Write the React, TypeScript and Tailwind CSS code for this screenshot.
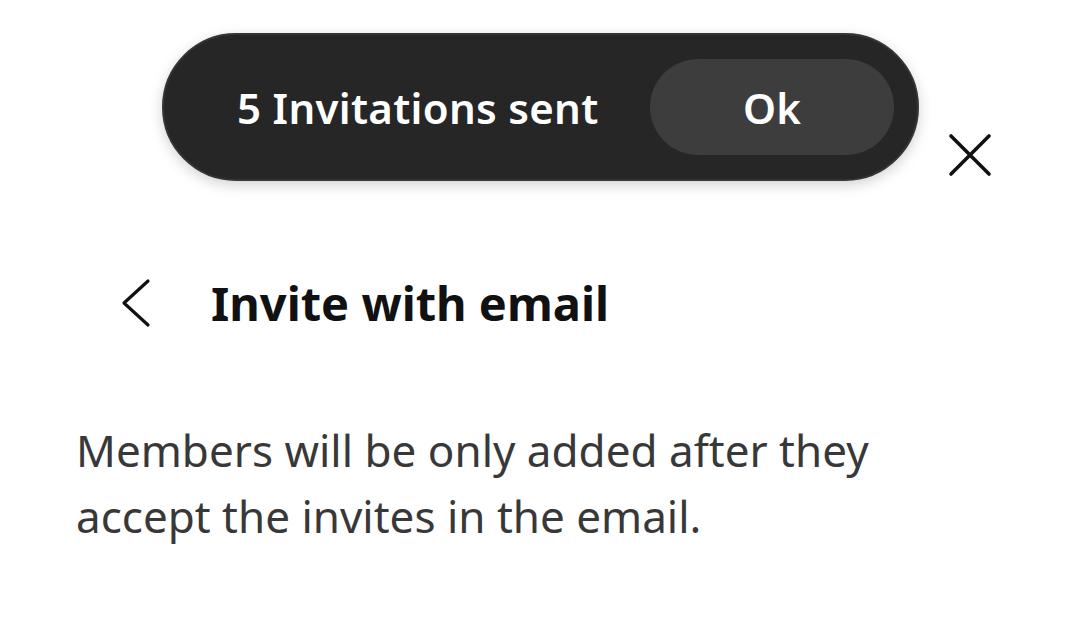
export default function App() {
  return (
    <div
      className="relative w-[1080px] h-[621px] overflow-hidden bg-white"
      style={{ fontFamily: '"Noto Sans", "Open Sans", sans-serif' }}
    >
      {/* toast */}
      <div className="absolute left-[162px] top-[33px] z-10 flex h-[148px] w-[757px] items-center justify-between rounded-full border-2 border-[#353535] bg-[#262626] pl-[73px] pr-[23px] shadow-[0_4px_14px_rgba(0,0,0,0.18)]">
        <span className="text-[42px] font-semibold text-white tracking-[0.3px]">5 Invitations sent</span>
        <button className="flex h-[96px] w-[244px] items-center justify-center rounded-full bg-[#3d3d3d] text-[42px] font-semibold text-white">
          Ok
        </button>
      </div>

      <div className="flex flex-col">
        <div className="flex justify-end pr-[88px] pt-[133px]">
          <button className="text-[#111]">
            <svg width="44" height="44" viewBox="0 0 44 44" fill="none" stroke="currentColor" strokeWidth="3.6" strokeLinecap="round">
              <path d="M3 3 41 41M41 3 3 41" />
            </svg>
          </button>
        </div>

        <div className="mt-[96px] flex h-[60px] items-center pl-[121px]">
          <svg width="30" height="50" viewBox="0 0 30 50" fill="none" stroke="#111" strokeWidth="3.2" strokeLinecap="round" strokeLinejoin="round">
            <path d="M27 3 3 25l24 22" />
          </svg>
          <h1 className="ml-[60px] text-[47px] leading-[60px] font-bold text-[#111]">Invite with email</h1>
        </div>

        <p className="mt-[84px] w-[900px] pl-[76px] text-[44px] leading-[66px] text-[#383838]">
          Members will be only added after they accept the invites in the email.
        </p>
      </div>
    </div>
  );
}
